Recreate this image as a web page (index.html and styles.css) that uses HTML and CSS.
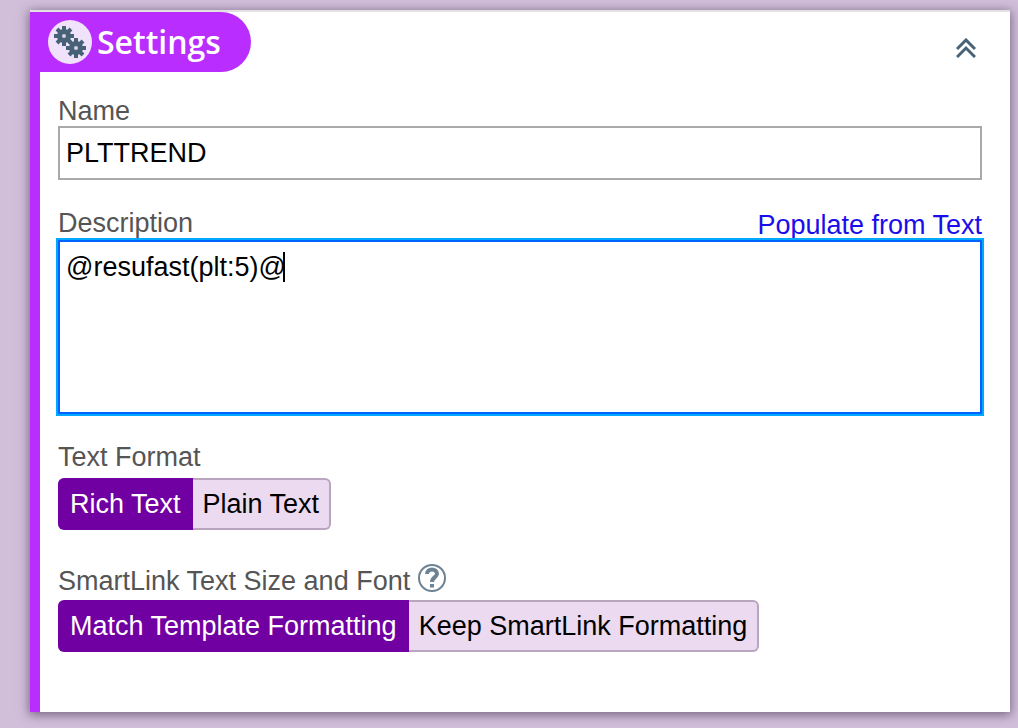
FILE: index.html
```
<!DOCTYPE html>
<html lang="en">
<head>
    <meta charset="UTF-8">
    <meta name="viewport" content="width=device-width, initial-scale=1.0">
    <title>Settings</title>
    <link rel="stylesheet" href="styles.css">
</head>
<body>
    <main class="panel">
        <header class="panel-header">
            <h1 class="panel-title">
                <svg class="gears" viewBox="0 0 44 44" aria-hidden="true">
                    <defs>
                        <g id="gear">
                            <path d="M0 -10V10M-10 0H10M-7 -7L7 7M-7 7L7 -7" stroke="#476277" stroke-width="4"/>
                            <circle r="7" fill="#476277"/>
                            <circle r="2" fill="#d9d0e6"/>
                        </g>
                    </defs>
                    <circle cx="22" cy="22" r="22" fill="#f1e2fb"/>
                    <use href="#gear" x="16" y="16"/>
                    <use href="#gear" x="28" y="28"/>
                </svg>
                Settings
            </h1>
            <button class="collapse-btn" type="button" aria-label="Collapse">
                <svg viewBox="0 0 20 20" aria-hidden="true">
                    <path d="M1 11L10 2L19 11M1 19L10 10L19 19"/>
                </svg>
            </button>
        </header>

        <form class="panel-body">
            <div class="field">
                <label for="name">Name</label>
                <input id="name" class="text-box" type="text" value="PLTTREND">
            </div>

            <div class="field">
                <div class="label-row">
                    <label for="description">Description</label>
                    <a class="populate-link" href="#">Populate from Text</a>
                </div>
                <div class="description-box">
                    <textarea id="description" class="text-area">@resufast(plt:5)@</textarea>
                    <span class="caret"></span>
                </div>
            </div>

            <div class="field" role="radiogroup" aria-labelledby="format-label">
                <div id="format-label" class="group-label">Text Format</div>
                <div class="segments">
                    <label class="segment"><input type="radio" name="format" checked><span>Rich Text</span></label>
                    <label class="segment"><input type="radio" name="format"><span>Plain Text</span></label>
                </div>
            </div>

            <div class="field" role="radiogroup" aria-labelledby="font-label">
                <div class="help-row">
                    <span id="font-label" class="help-label">SmartLink Text Size and Font</span>
                    <button class="help-btn" type="button" aria-label="Help">
                        <svg viewBox="0 0 28 28" aria-hidden="true">
                            <circle cx="14" cy="14" r="13"/>
                            <path class="mark" d="M9 10C9 4 19 4 19 10C19 13 14 13.500 14 18M14 20V23.500"/>
                        </svg>
                    </button>
                </div>
                <div class="segments">
                    <label class="segment"><input type="radio" name="font" checked><span>Match Template Formatting</span></label>
                    <label class="segment"><input type="radio" name="font"><span>Keep SmartLink Formatting</span></label>
                </div>
            </div>
        </form>
    </main>
</body>
</html>
```

FILE: styles.css
```
:root {
    --accent: #b92dff;
    --accent-dark: #7000a2;
    --accent-light: #ecdaf0;
    --label-color: #555;
    --icon-color: #476277;
}
* {
    box-sizing: border-box;
}
body {
    margin: 0;
    padding: 10px 8px 16px 30px;
    font-family: "Liberation Sans", Arial, sans-serif;
    font-size: 27px;
    line-height: 30px;
    color: var(--label-color);
    background-color: #d1bfda;
}
.panel {
    padding-left: 10px;
    border-top: 2px solid #e2e2e2;
    background: linear-gradient(var(--accent), var(--accent)) no-repeat left top / 10px 100% #fff;
    box-shadow: 0 2px 10px 1px rgba(50, 30, 60, 0.55);
}
.panel-header {
    display: flex;
    justify-content: space-between;
    align-items: center;
    height: 60px;
    padding-right: 34px;
}
.panel-title {
    display: flex;
    align-items: center;
    gap: 5px;
    height: 60px;
    margin: 0;
    padding: 0 30px 0 8px;
    border-radius: 0 30px 30px 0;
    font-family: "Open Sans", "Noto Sans", sans-serif;
    font-size: 32px;
    font-weight: 600;
    color: #fff;
    background-color: var(--accent);
}
.gears {
    width: 44px;
    height: 44px;
}
.collapse-btn, .help-btn {
    display: flex;
    padding: 0;
    border: none;
    background: none;
    cursor: pointer;
}
.collapse-btn {
    margin-top: 12px;
}
.collapse-btn svg {
    width: 20px;
    height: 20px;
    fill: none;
    stroke: var(--icon-color);
    stroke-width: 3;
}
.panel-body {
    display: flex;
    flex-direction: column;
    gap: 28px;
    padding: 24px 28px 60px 18px;
}
.field {
    display: flex;
    flex-direction: column;
}
.text-box, .text-area {
    display: block;
    width: 100%;
    margin: 0;
    border: 2px solid #a9a9a9;
    border-radius: 0;
    font: inherit;
    color: #000;
    background-color: #fff;
}
.text-box {
    height: 54px;
    padding: 0 6px;
}
.label-row {
    display: flex;
    justify-content: space-between;
    height: 32px;
}
.populate-link {
    padding-top: 2px;
    color: #1a0dea;
    text-decoration: none;
}
.description-box {
    position: relative;
}
.text-area {
    height: 174px;
    padding: 10px 6px;
    border-color: #0062ff;
    outline: 2px solid #00a8ff;
    resize: none;
}
/* insertion point after the text */
.caret {
    position: absolute;
    top: 12px;
    left: 225px;
    width: 2px;
    height: 30px;
    background-color: #000;
}
.group-label {
    margin-bottom: 6px;
}
.help-row {
    display: flex;
    gap: 8px;
    height: 36px;
    margin-top: 6px;
}
.help-label {
    padding-top: 2px;
}
.help-btn {
    height: 28px;
}
.help-btn svg {
    width: 28px;
    height: 28px;
    fill: none;
    stroke: #6d8293;
    stroke-width: 2;
}
.help-btn .mark {
    stroke-width: 4;
}
.segments {
    display: flex;
}
.segment input {
    position: absolute;
    opacity: 0;
}
.segment span {
    display: block;
    padding: 9px 10px;
    border: 2px solid #b9a5bd;
    border-left: none;
    border-radius: 0 6px 6px 0;
    color: #000;
    background-color: var(--accent-light);
    cursor: pointer;
}
.segment:first-child span {
    padding: 9px 12px;
    border-right: none;
    border-radius: 6px 0 0 6px;
}
.segment input:checked + span {
    border-color: var(--accent-dark);
    color: #fff;
    background-color: var(--accent-dark);
}
```
